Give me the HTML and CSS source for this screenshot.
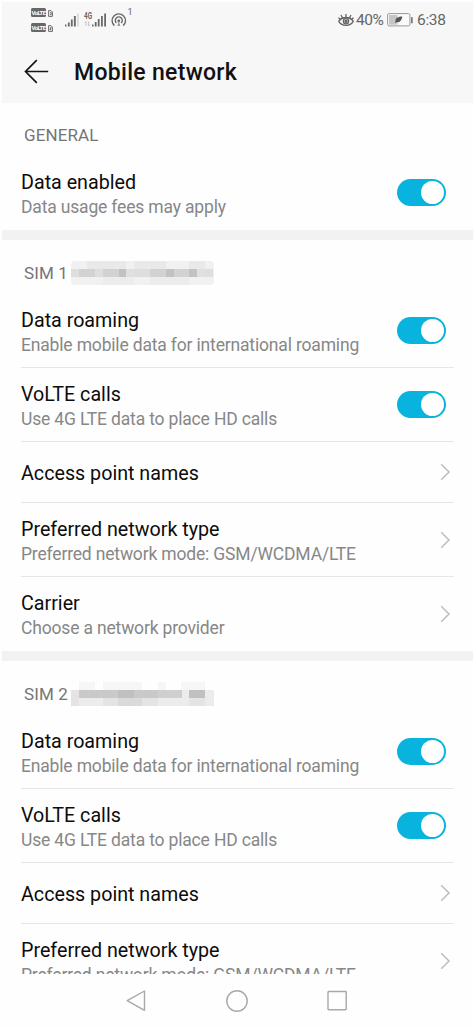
FILE: index.html
```html
<!DOCTYPE html>
<html lang="en">
<head>
<meta charset="utf-8">
<title>Mobile network</title>
<link rel="stylesheet" href="styles.css">
</head>
<body>
<svg class="defs" width="0" height="0">
  <symbol id="chevron" viewBox="0 0 12 18"><path d="M1.200 1.200 9 9l-7.800 7.800" fill="none" stroke="#bdbdbd" stroke-width="1.500"/></symbol>
</svg>
<div class="screen">
  <header class="top">
    <div class="status">
      <div class="volte">
        <div class="volte-line"><span class="badge">VoLTE</span><svg width="5" height="7" viewBox="0 0 5 7"><path d="M.6.6h2.400l1.400 1.400v4.400H.6zM2 2.700h1.200v2H2" fill="none" stroke="#6c6c6c" stroke-width="1"/></svg></div>
        <div class="volte-line"><span class="badge">VoLTE</span><svg width="5" height="7" viewBox="0 0 5 7"><path d="M.6.6h2.400l1.400 1.400v4.400H.6zM1.800 2.700h1.400L1.800 4.700h1.600" fill="none" stroke="#6c6c6c" stroke-width="1"/></svg></div>
      </div>
      <svg class="signal" width="65" height="24" viewBox="0 0 65 24">
        <g fill="#6a6a6a">
          <path d="M0 17.500h1.500V19.500H0zM2.900 15.500h1.800v4H2.900zM5.900 12.500h1.800v7H5.900zM8.900 9h1.900v10.500H8.900z"/>
          <path d="M12.300 6.500h1.400v13h-1.400z" fill="#d0d0d0"/>
          <path d="M27 17.500h1.500v2H27zM29.800 15h1.800v4.500h-1.800zM32.800 12h1.800v7.500h-1.800zM36 9h1.800v10.500H36zM39.200 6.500h1.800v13h-1.800z"/>
        </g>
        <text class="gen" x="19" y="12" textLength="8" lengthAdjust="spacingAndGlyphs">4G</text>
        <path d="M21 19v-4.500m-1.200 1.200L21 14.500M23.700 14.500V19m1.200-1.200L23.700 19" fill="none" stroke="#bbb" stroke-width=".9"/>
        <g fill="none" stroke="#6a6a6a" stroke-width="1.400">
          <path d="M49.400 18.600a6.700 6.700 0 1 1 8.800 0M51.400 15.900a3.500 3.500 0 1 1 4.800 0"/>
        </g>
        <circle cx="53.800" cy="13.900" r="1.400" fill="#6a6a6a"/>
        <path d="M53.800 14 52.300 19h3z" fill="#9a9a9a"/>
      </svg>
      <span class="one">1</span>
      <div class="spacer"></div>
      <svg class="eye" width="16" height="14" viewBox="0 0 16 14" fill="none" stroke="#626262" stroke-width="1.300">
        <path d="M.8 8.300C4 3.200 12 3.200 15.200 8.300 12 13.700 4 13.700.8 8.300zM8 4.300V1M4.500 5 3 2M11.500 5 13 2M2 6.500.6 4.700M14 6.500l1.400-1.800"/>
        <circle cx="8" cy="8.300" r="2.600"/><circle cx="8" cy="8.300" r="1" fill="#626262"/>
      </svg>
      <span class="pct">40%</span>
      <svg class="battery" width="26" height="14" viewBox="0 0 26 14">
        <rect x=".6" y=".6" width="22.300" height="12.300" rx="1.500" fill="#fafafa" stroke="#999" stroke-width="1"/>
        <path d="M2 2h8.500v9.700H2z" fill="#c6c6c6"/>
        <path d="M24 4.200h1.700v6H24z" fill="#777"/>
        <path d="M15.300 3.500c-4 .2-7 1.400-6.800 4.200l-.6 2.500 1.300-1c3.600.6 5.500-1.800 6.100-5.700z" fill="#555"/>
      </svg>
      <span class="clock">6:38</span>
    </div>
    <div class="titlebar">
      <svg width="26" height="26" viewBox="0 0 26 26" fill="none" stroke="#161616" stroke-width="1.700"><path d="M24.200 12.500H1.500M12.800 1.200 1.500 12.500l11.300 11.300"/></svg>
      <h1>Mobile network</h1>
    </div>
  </header>

  <main class="list">
    <section class="group general">
      <h2>GENERAL</h2>
      <div class="row last"><div class="text"><div class="name">Data enabled</div><div class="desc">Data usage fees may apply</div></div><span class="switch"></span></div>
    </section>

    <section class="group">
      <h2><span class="sim">SIM 1</span>
        <svg class="mosaic" width="143" height="24" viewBox="0 0 143 24" shape-rendering="crispEdges">
          <rect width="143" height="24" rx="4" fill="#f1f1f1"/>
          <path d="M16 0h39v8H16zM63 0h32v8H63zM118 0h16v8h-16z" fill="#e9e9e9"/>
          <path d="M0 8h8v8H0zM24 8h8v8h-8zM63 8h16v8H63zM134 8h8v8h-8z" fill="#dedede"/>
          <path d="M8 8h16v8H8zM32 8h16v8H32zM79 8h16v8H79zM103 8h15v8h-15z" fill="#d2d2d2"/>
          <path d="M48 8h7v8h-7zM95 8h8v8h-8zM118 8h8v8h-8z" fill="#c2c2c2"/>
          <path d="M55 8h8v8h-8zM126 8h8v8h-8z" fill="#e0e0e0"/>
          <path d="M32 16h31v8H32zM79 16h39v8H79z" fill="#ececec"/>
        </svg>
      </h2>
      <div class="row"><div class="text"><div class="name">Data roaming</div><div class="desc">Enable mobile data for international roaming</div></div><span class="switch"></span></div>
      <div class="row"><div class="text"><div class="name">VoLTE calls</div><div class="desc">Use 4G LTE data to place HD calls</div></div><span class="switch"></span></div>
      <div class="row single"><div class="text"><div class="name">Access point names</div></div><svg class="chev" width="12" height="18"><use href="#chevron"/></svg></div>
      <div class="row"><div class="text"><div class="name">Preferred network type</div><div class="desc">Preferred network mode: GSM/WCDMA/LTE</div></div><svg class="chev" width="12" height="18"><use href="#chevron"/></svg></div>
      <div class="row last"><div class="text"><div class="name">Carrier</div><div class="desc">Choose a network provider</div></div><svg class="chev" width="12" height="18"><use href="#chevron"/></svg></div>
    </section>

    <section class="group">
      <h2><span class="sim">SIM 2</span>
        <svg class="mosaic" width="143" height="24" viewBox="0 0 143 24" shape-rendering="crispEdges">
          <path d="M0 8h143v16H0z" fill="#ececec"/>
          <path d="M8 0h16v8H8zM32 0h39v8H32zM87 0h8v8h-8zM110 0h24v8h-24z" fill="#f6f6f6"/>
          <path d="M0 8h8v16H0zM32 16h15v8H32zM71 16h16v8H71zM118 16h16v8h-16z" fill="#e4e4e4"/>
          <path d="M47 16h24v8H47z" fill="#dadada"/>
          <path d="M8 8h79v8H8z" fill="#c9c9c9"/>
          <path d="M47 8h16v8H47zM118 8h16v8h-16z" fill="#c0c0c0"/>
          <path d="M87 8h24v8H87z" fill="#cfcfcf"/>
        </svg>
      </h2>
      <div class="row"><div class="text"><div class="name">Data roaming</div><div class="desc">Enable mobile data for international roaming</div></div><span class="switch"></span></div>
      <div class="row"><div class="text"><div class="name">VoLTE calls</div><div class="desc">Use 4G LTE data to place HD calls</div></div><span class="switch"></span></div>
      <div class="row single"><div class="text"><div class="name">Access point names</div></div><svg class="chev" width="12" height="18"><use href="#chevron"/></svg></div>
      <div class="row last"><div class="text"><div class="name">Preferred network type</div><div class="desc">Preferred network mode: GSM/WCDMA/LTE</div></div><svg class="chev" width="12" height="18"><use href="#chevron"/></svg></div>
    </section>
  </main>

  <nav class="nav">
    <svg width="22" height="24" viewBox="0 0 22 24"><path d="M19.500 2v19.300L2.200 11.700z"/></svg>
    <svg width="24" height="24" viewBox="0 0 24 24"><circle cx="12" cy="12" r="10.200"/></svg>
    <svg width="22" height="24" viewBox="0 0 22 24"><rect x="2" y="2.500" width="18.200" height="18.200" rx=".6"/></svg>
  </nav>
</div>
</body>
</html>
```
FILE: styles.css
```css
* { box-sizing: border-box; }
body { margin: 0; background: #fefefe; font-family: Roboto, "Liberation Sans", sans-serif; }
.defs { display: block; height: 0; }
.screen { width: 474px; height: 1027px; padding: 2px 1px 0 2px; display: flex; flex-direction: column; overflow: hidden; }
.top { height: 101px; flex: none; background: #f7f7f7; }
.status { height: 40px; display: flex; align-items: flex-start; padding: 5px 28px 0 29px; color: #666; }
.volte { display: flex; flex-direction: column; gap: 6px; margin-top: 1px; width: 22px; }
.volte-line { display: flex; align-items: flex-end; gap: 2px; height: 9px; }
.badge { width: 15px; height: 9px; border-radius: 1.5px; background: #686868; color: #fff; font-size: 6px; font-weight: 700; line-height: 9px; letter-spacing: -.6px; text-align: center; }
.signal { flex: none; margin-left: 12px; }
.gen { font: 700 9px Roboto, sans-serif; fill: #666; }
.one { font-size: 9px; line-height: 10px; margin-left: -2.500px; }
.spacer { flex: 1; }
.eye { margin-top: 6px; }
.pct, .clock { font-size: 15.500px; line-height: 18px; margin-top: 4px; white-space: nowrap; }
.pct { margin-left: 2px; width: 28px; letter-spacing: -.45px; }
.battery { margin: 6px 0 0 3px; }
.clock { margin-left: 4px; width: 28px; letter-spacing: -.3px; }
.titlebar { display: flex; align-items: center; height: 60px; padding-left: 22px; }
h1 { margin: 2px 0 0 24px; font-size: 23px; font-weight: 500; line-height: 28px; letter-spacing: .3px; color: #111; }
.list { flex: none; height: 871px; overflow: hidden; }
.group { border-bottom: 10px solid #f2f2f2; }
h2 { margin: 0; height: 54px; padding: 12px 0 0 22px; display: flex; align-items: center; font-size: 17px; font-weight: 400; line-height: 20px; color: #757575; white-space: nowrap; }
.sim { width: 47px; letter-spacing: .1px; }
.general h2 { height: 53px; padding-top: 10px; letter-spacing: .1px; }
.row { height: 74px; margin: 0 19px; display: flex; align-items: center; justify-content: space-between; border-bottom: 1px solid #e6e6e6; }
.row.single { height: 61px; }
.row.last { border-bottom-color: transparent; }
.text { padding-top: 4px; }
.single .text { padding-top: 2px; }
.name { font-size: 19.700px; line-height: 25px; color: #0c0c0c; white-space: nowrap; }
.desc { font-size: 17.500px; line-height: 25px; letter-spacing: -.17px; color: #878787; white-space: nowrap; }
.switch { flex: none; width: 48.500px; height: 27px; margin-right: 8.500px; border-radius: 14px; background: #08b4de; padding: 2px; display: flex; justify-content: flex-end; }
.switch::before { content: ""; width: 23px; height: 23px; border-radius: 50%; background: #fff; }
.chev { flex: none; margin-right: 2px; }
.nav { flex: 1; display: flex; align-items: center; justify-content: space-between; padding: 0 125px 0 123px; }
.nav svg { fill: none; stroke: #a8a8a8; stroke-width: 1.400; stroke-linejoin: round; }
```
